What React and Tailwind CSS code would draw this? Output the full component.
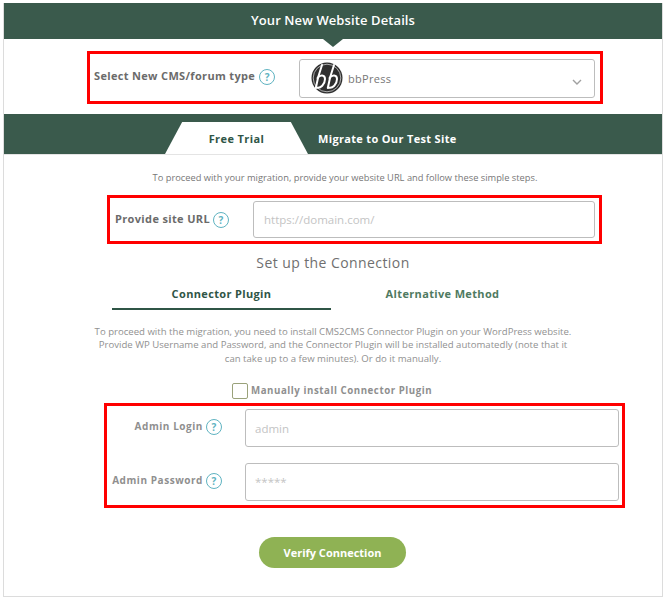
import React from 'react';

const Help = () => (
  <span className="w-[16px] h-[16px] shrink-0 rounded-full border border-[#5fb3c1] text-[#5fb3c1] text-[10px] font-bold flex items-center justify-center leading-none">
    ?
  </span>
);

const BbLogo = () => (
  <svg width="32" height="32" viewBox="0 0 32 32" className="shrink-0">
    <circle cx="16" cy="16" r="15.5" fill="#2f2f2f" />
    <circle cx="16" cy="16" r="13.8" fill="none" stroke="#d0d0d0" strokeWidth="0.8" />
    <g fill="none" stroke="#fff" strokeWidth="2" strokeLinecap="round">
      <path d="M11 3C8.5 10 6 19 4.8 26" />
      <path d="M6.5 16C9 12.5 14 12.5 14 17C14 22 9.5 27 5.5 25.5" />
      <path d="M23 3C20.5 10 18 19 16.8 26" />
      <path d="M18.5 16C21 12.5 26 12.5 26 17C26 22 21.5 27 17.5 25.5" />
    </g>
  </svg>
);

const Field = ({ placeholder, className }) => (
  <input
    readOnly
    placeholder={placeholder}
    className={`border border-[#bdbdbd] rounded-[3px] bg-white outline-none text-[11.5px] placeholder:text-[#c4c4c4] ${className}`}
  />
);

export default function App() {
  return (
    <div className="w-[667px] h-[600px] bg-white pt-[3px] pl-[3px] font-['Open_Sans',sans-serif]">
      <div className="w-[660px] h-[594px] border border-t-0 border-[#dcdcdc] relative">
        <div className="h-[36px] bg-[#3a5a4c] text-white text-[13px] font-semibold tracking-[0.1px] flex items-center justify-center">
          Your New Website Details
        </div>
        <div className="absolute left-[319px] top-[36px] w-0 h-0 border-x-[10px] border-x-transparent border-t-[8px] border-t-[#3a5a4c]" />

        <div className="ml-[83px] mt-[12px] w-[516px] h-[53px] border-[3px] border-[#ff0000] flex items-center pl-[4px] pr-[5px]">
          <span className="text-[11px] font-bold text-[#6b6b6b] tracking-[0.33px] mr-[4px] whitespace-nowrap -mt-[2px]">Select New CMS/forum type</span>
          <span className="-mt-[2px]"><Help /></span>
          <div className="ml-auto mt-[1px] w-[296px] h-[39px] border border-[#bdbdbd] rounded-[3px] flex items-center pl-[11px] pr-[12px]">
            <BbLogo />
            <span className="ml-[5px] mt-[2px] text-[11px] text-[#777] tracking-[0.3px]">bbPress</span>
            <svg width="10" height="6" viewBox="0 0 10 6" className="ml-auto mt-[7px]">
              <path d="M1 1l4 4 4-4" fill="none" stroke="#a0a0a0" strokeWidth="1.4" />
            </svg>
          </div>
        </div>

        <div className="mt-[10px] h-[41px] bg-[#3a5a4c] flex items-end border-b border-[#e4e4e4] pl-[161px]">
          <div className="w-[143px] h-[32px] pt-[2px] bg-white [clip-path:polygon(12%_0,88%_0,100%_100%,0_100%)] flex items-center justify-center text-[11px] font-bold text-[#2f5546] tracking-[0.4px]">
            Free Trial
          </div>
          <div className="h-[32px] pt-[2px] ml-[10px] flex items-center text-[11px] font-bold text-white tracking-[0.33px]">
            Migrate to Our Test Site
          </div>
        </div>

        <p className="mt-[16px] pl-[24px] text-center text-[9.3px] leading-[13px] text-[#777]">
          To proceed with your migration, provide your website URL and follow these simple steps.
        </p>

        <div className="ml-[103px] mt-[11px] w-[495px] h-[49px] border-[3px] border-[#ff0000] flex items-center pl-[5px] pr-[4px]">
          <span className="text-[11px] font-bold text-[#6b6b6b] tracking-[0.35px] mr-[3px] whitespace-nowrap">Provide site URL</span>
          <Help />
          <Field placeholder="https://domain.com/" className="ml-auto w-[342px] h-[37px] pl-[10px]" />
        </div>

        <h2 className="mt-[9px] text-center text-[14px] leading-[20px] text-[#6f6f6f] tracking-[0.42px]">Set up the Connection</h2>

        <div className="ml-[108px] mt-[10px] flex text-[11px] font-bold tracking-[0.35px]">
          <div className="w-[219px] h-[27px] border-b-2 border-[#2f5546] text-[#2f5546] text-center leading-[22px]">Connector Plugin</div>
          <div className="w-[223px] text-[#4f7a61] text-center leading-[22px]">Alternative Method</div>
        </div>

        <p className="mt-[15px] mx-auto w-[484px] text-center text-[9.6px] leading-[13.3px] text-[#919191]">
          To proceed with the migration, you need to install CMS2CMS Connector Plugin on your WordPress website.
          Provide WP Username and Password, and the Connector Plugin will be installed automatedly (note that it
          can take up to a few minutes). Or do it manually.
        </p>

        <div className="mt-[18px] ml-[228px] flex items-center h-[16px]">
          <span className="w-[16px] h-[16px] border border-[#9aa27a] rounded-[2px] mr-[3px]" />
          <span className="text-[9.7px] font-bold text-[#8f8f8f] tracking-[0.55px]">Manually install Connector Plugin</span>
        </div>

        <div className="ml-[100px] mt-[4px] w-[521px] h-[105px] border-[3px] border-[#ff0000] pl-[5px] pr-[3px] pt-[3px]">
          <div className="flex items-center h-[38px]">
            <div className="w-[110px] flex items-center justify-end -mt-[2px]">
              <span className="text-[10px] font-bold text-[#8f8f8f] tracking-[0.55px] mr-[3px] whitespace-nowrap">Admin Login</span>
              <Help />
            </div>
            <Field placeholder="admin" className="ml-auto w-[374px] h-[38px] pl-[9px] pt-[1px]" />
          </div>
          <div className="flex items-center h-[38px] mt-[16px]">
            <div className="w-[110px] flex items-center justify-end -mt-[2px]">
              <span className="text-[10px] font-bold text-[#8f8f8f] tracking-[0.55px] mr-[3px] whitespace-nowrap">Admin Password</span>
              <Help />
            </div>
            <Field placeholder="*****" className="ml-auto w-[374px] h-[38px] pl-[9px]" />
          </div>
        </div>

        <div className="mt-[29px] pr-[1px] flex justify-center">
          <button className="w-[147px] h-[31px] pt-[1px] rounded-full bg-[#8fb254] text-white text-[11px] font-bold">
            Verify Connection
          </button>
        </div>
      </div>
    </div>
  );
}
